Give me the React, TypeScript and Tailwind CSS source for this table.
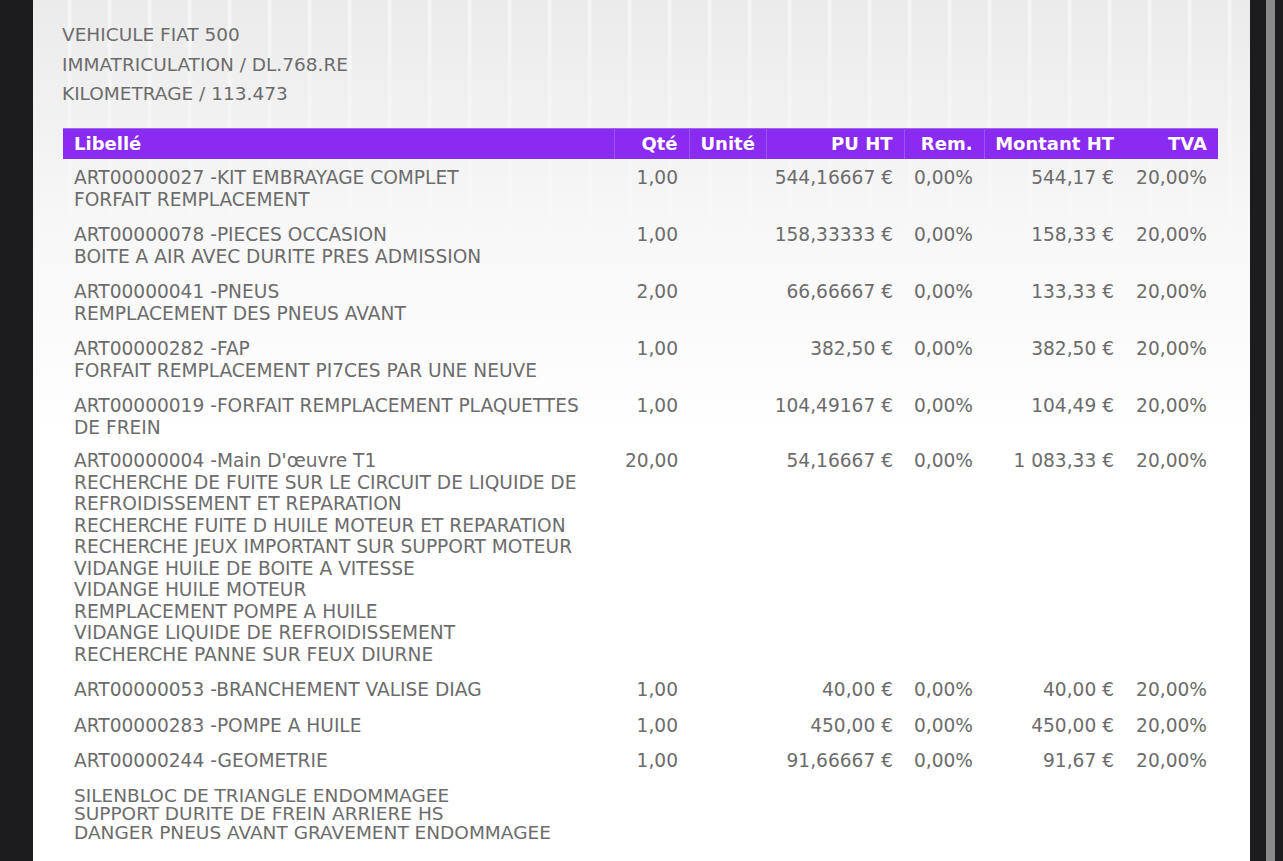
import React from 'react';

type Line = {
  lines: string[];
  qte: string;
  pu: string;
  rem: string;
  montant: string;
  tva: string;
  tight?: boolean;
};

const rows: Line[] = [
  {
    lines: ['ART00000027 -KIT EMBRAYAGE COMPLET', 'FORFAIT REMPLACEMENT'],
    qte: '1,00', pu: '544,16667 €', rem: '0,00%', montant: '544,17 €', tva: '20,00%',
  },
  {
    lines: ['ART00000078 -PIECES OCCASION', 'BOITE A AIR AVEC DURITE PRES ADMISSION'],
    qte: '1,00', pu: '158,33333 €', rem: '0,00%', montant: '158,33 €', tva: '20,00%',
  },
  {
    lines: ['ART00000041 -PNEUS', 'REMPLACEMENT DES PNEUS AVANT'],
    qte: '2,00', pu: '66,66667 €', rem: '0,00%', montant: '133,33 €', tva: '20,00%',
  },
  {
    lines: ['ART00000282 -FAP', 'FORFAIT REMPLACEMENT PI7CES PAR UNE NEUVE'],
    qte: '1,00', pu: '382,50 €', rem: '0,00%', montant: '382,50 €', tva: '20,00%',
  },
  {
    lines: ['ART00000019 -FORFAIT REMPLACEMENT PLAQUETTES DE FREIN'],
    qte: '1,00', pu: '104,49167 €', rem: '0,00%', montant: '104,49 €', tva: '20,00%',
    tight: true,
  },
  {
    lines: [
      "ART00000004 -Main D'œuvre T1",
      'RECHERCHE DE FUITE SUR LE CIRCUIT DE LIQUIDE DE REFROIDISSEMENT ET REPARATION',
      'RECHERCHE FUITE D HUILE MOTEUR ET REPARATION',
      'RECHERCHE JEUX IMPORTANT SUR SUPPORT MOTEUR',
      'VIDANGE HUILE DE BOITE A VITESSE',
      'VIDANGE HUILE MOTEUR',
      'REMPLACEMENT POMPE A HUILE',
      'VIDANGE LIQUIDE DE REFROIDISSEMENT',
      'RECHERCHE PANNE SUR FEUX DIURNE',
    ],
    qte: '20,00', pu: '54,16667 €', rem: '0,00%', montant: '1 083,33 €', tva: '20,00%',
  },
  {
    lines: ['ART00000053 -BRANCHEMENT VALISE DIAG'],
    qte: '1,00', pu: '40,00 €', rem: '0,00%', montant: '40,00 €', tva: '20,00%',
  },
  {
    lines: ['ART00000283 -POMPE A HUILE'],
    qte: '1,00', pu: '450,00 €', rem: '0,00%', montant: '450,00 €', tva: '20,00%',
  },
  {
    lines: ['ART00000244 -GEOMETRIE'],
    qte: '1,00', pu: '91,66667 €', rem: '0,00%', montant: '91,67 €', tva: '20,00%',
  },
];

const notes = [
  'SILENBLOC DE TRIANGLE ENDOMMAGEE',
  'SUPPORT DURITE DE FREIN ARRIERE HS',
  'DANGER PNEUS AVANT GRAVEMENT ENDOMMAGEE',
];

const App: React.FC = () => {
  return (
    <div className="flex h-[861px] w-full overflow-hidden bg-[#1c1c1e] font-['DejaVu_Sans',sans-serif]">
      <div className="w-[33px] shrink-0" />

      {/* Document page */}
      <div className="relative w-[1217px] shrink-0 overflow-hidden bg-white">
        {/* Light streak backdrop */}
        <div className="pointer-events-none absolute inset-x-0 top-0 h-[440px] bg-gradient-to-b from-[#ebebeb] via-[#f7f7f7] to-white" />
        <div className="pointer-events-none absolute inset-x-0 top-0 h-[320px] bg-[repeating-linear-gradient(90deg,transparent_0px,transparent_34px,rgba(255,255,255,0.75)_36px,rgba(255,255,255,0.75)_37px,transparent_40px)] [mask-image:linear-gradient(to_bottom,rgba(0,0,0,0.8),transparent)]" />

        <div className="relative px-[29px] pt-[20px] text-[18.5px] text-[#6c6c6c]">
          <div className="leading-[29.5px]">
            <div>VEHICULE FIAT 500</div>
            <div>IMMATRICULATION / DL.768.RE</div>
            <div>KILOMETRAGE / 113.473</div>
          </div>

          <table className="mt-[19px] ml-px w-[1155px] table-fixed border-collapse text-[18.6px] leading-[21.5px]">
            <colgroup>
              <col className="w-[551px]" />
              <col className="w-[75px]" />
              <col className="w-[77px]" />
              <col className="w-[138px]" />
              <col className="w-[80px]" />
              <col className="w-[141px]" />
              <col className="w-[93px]" />
            </colgroup>
            <thead>
              <tr className="h-[31px] border-t border-[#a566f5] bg-[#8a2bf0] text-[18px] font-bold leading-[22px] text-white whitespace-nowrap">
                <th className="px-[11px] text-left">Libellé</th>
                <th className="border-l border-[#9d52f3] px-[11px] text-right">Qté</th>
                <th className="border-l border-[#9d52f3] px-[11px] text-left">Unité</th>
                <th className="border-l border-[#9d52f3] px-[11px] text-right">PU HT</th>
                <th className="border-l border-[#9d52f3] px-[11px] text-right">Rem.</th>
                <th className="border-l border-[#9d52f3] pl-0 pr-[11px] text-right">Montant HT</th>
                <th className="px-[11px] text-right">TVA</th>
              </tr>
            </thead>
            <tbody>
              {rows.map((r, i) => (
                <tr key={i} className="align-top">
                  <td className={`px-[11px] pt-[8px] ${r.tight ? 'pb-[4px]' : 'pb-[6px]'}`}>
                    {r.lines.map((l, j) => (
                      <div key={j}>{l}</div>
                    ))}
                  </td>
                  <td className="px-[11px] pt-[8px] text-right">{r.qte}</td>
                  <td className="px-[11px] pt-[8px]" />
                  <td className="pl-0 pr-[11px] pt-[8px] text-right whitespace-nowrap">{r.pu}</td>
                  <td className="pl-0 pr-[11px] pt-[8px] text-right">{r.rem}</td>
                  <td className="pl-0 pr-[11px] pt-[8px] text-right whitespace-pre">{r.montant}</td>
                  <td className="pl-0 pr-[11px] pt-[8px] text-right">{r.tva}</td>
                </tr>
              ))}
              <tr>
                <td colSpan={7} className="px-[11px] pt-[9px] text-[18.5px] leading-[18.7px]">
                  {notes.map((n, j) => (
                    <div key={j}>{n}</div>
                  ))}
                </td>
              </tr>
            </tbody>
          </table>
        </div>
      </div>

      {/* Viewer scrollbar */}
      <div className="flex shrink-0">
        <div className="w-[16px]" />
        <div className="w-[9px] bg-[#8a8a8a]" />
        <div className="w-[8px]" />
      </div>
    </div>
  );
};

export default App;
